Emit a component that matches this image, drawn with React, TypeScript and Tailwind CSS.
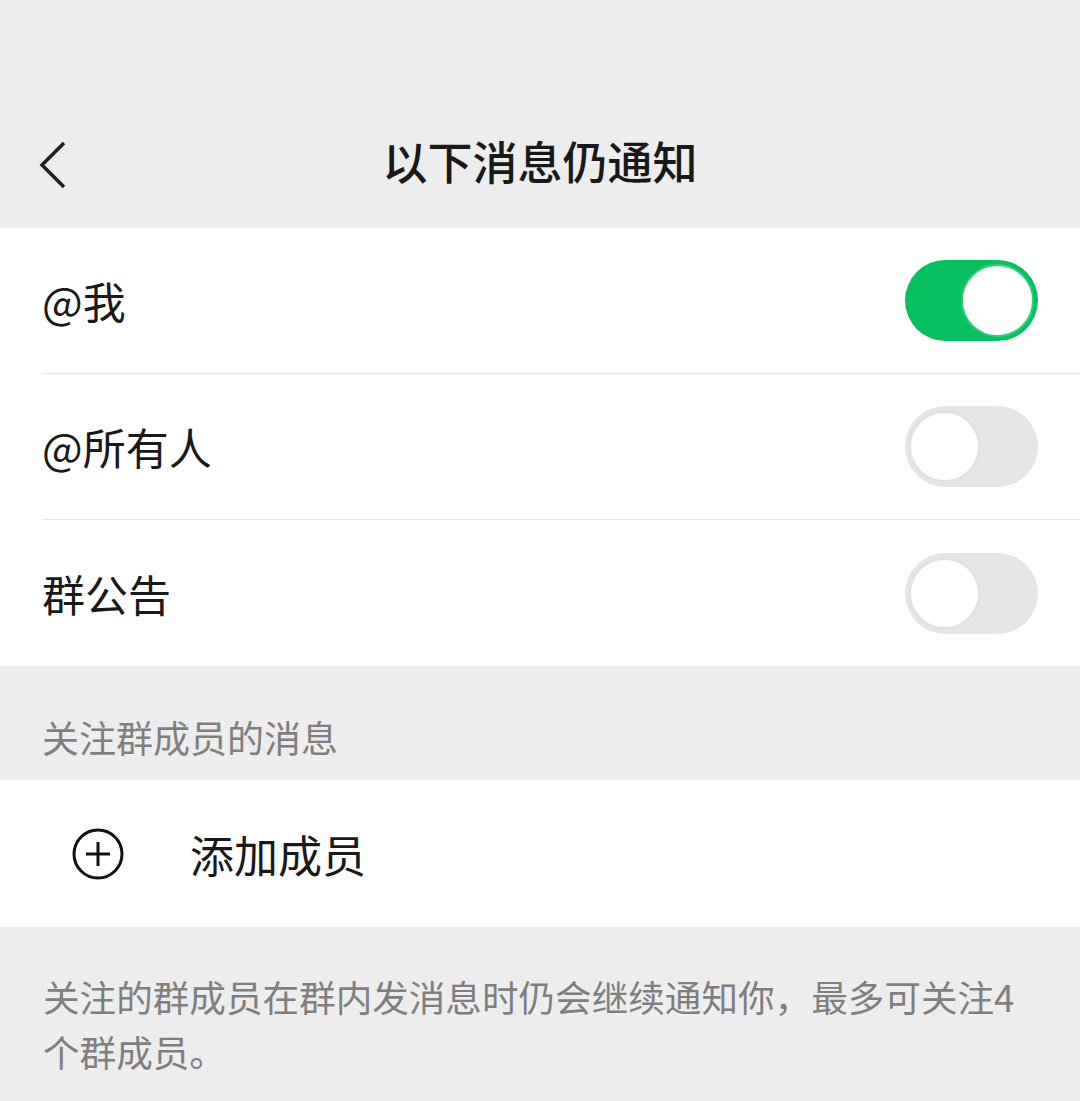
const font = { fontFamily: '"Noto Sans CJK SC", "Noto Sans", sans-serif' }

function Toggle({ on }: { on: boolean }) {
  return (
    <div
      className={`relative h-[81px] w-[133px] rounded-full ${on ? 'bg-[#07c160]' : 'bg-[#e6e6e6]'}`}
    >
      <div
        className={`absolute top-[4px] h-[73px] w-[73px] rounded-full bg-white ${
          on ? 'right-[4px] border-[2px] border-[#2fd07e]' : 'left-[3px] border-[3px] border-[#e2e2e2]'
        }`}
      />
    </div>
  )
}

function SwitchRow({ label, on, last }: { label: string; on: boolean; last?: boolean }) {
  return (
    <div className="pl-[42px]">
      <div
        className={`flex h-[146px] items-center justify-between pr-[42px] ${
          last ? '' : 'border-b border-[#e5e5e5]'
        }`}
      >
        <span className="text-[43px] leading-none text-[#191919]">{label}</span>
        <Toggle on={on} />
      </div>
    </div>
  )
}

export default function App() {
  return (
    <div className="min-h-[1101px] w-[1080px] bg-[#ededed]" style={font}>
      <div className="h-[100px]" />
      <div className="relative flex h-[128px] items-center justify-center pb-[8px]">
        <svg className="absolute left-[36px] top-[40px]" width="34" height="50" viewBox="0 0 34 50">
          <polyline points="28,3 6,25 28,47" fill="none" stroke="#1f1f1f" strokeWidth="3.5" />
        </svg>
        <h1 className="text-[45px] font-medium leading-none text-[#191919]">以下消息仍通知</h1>
      </div>

      <div className="bg-white">
        <SwitchRow label="@我" on />
        <SwitchRow label="@所有人" on={false} />
        <SwitchRow label="群公告" on={false} last />
      </div>

      <div className="flex h-[114px] items-end px-[42px] pb-[17px]">
        <span className="text-[37px] leading-[52px] text-[#7f7f7f]">关注群成员的消息</span>
      </div>

      <div className="flex h-[147px] items-center bg-white pl-[72px]">
        <svg width="52" height="52" viewBox="0 0 52 52">
          <circle cx="26" cy="26" r="24" fill="none" stroke="#111" strokeWidth="3" />
          <line x1="26" y1="14" x2="26" y2="38" stroke="#111" strokeWidth="3" />
          <line x1="14" y1="26" x2="38" y2="26" stroke="#111" strokeWidth="3" />
        </svg>
        <span className="ml-[66px] text-[44px] leading-none text-[#191919]">添加成员</span>
      </div>

      <div className="px-[43px] pt-[42px] pb-[30px]">
        <p className="text-[36.6px] leading-[55px] text-[#7f7f7f]">
          关注的群成员在群内发消息时仍会继续通知你，最多可关注4个群成员。
        </p>
      </div>
    </div>
  )
}
